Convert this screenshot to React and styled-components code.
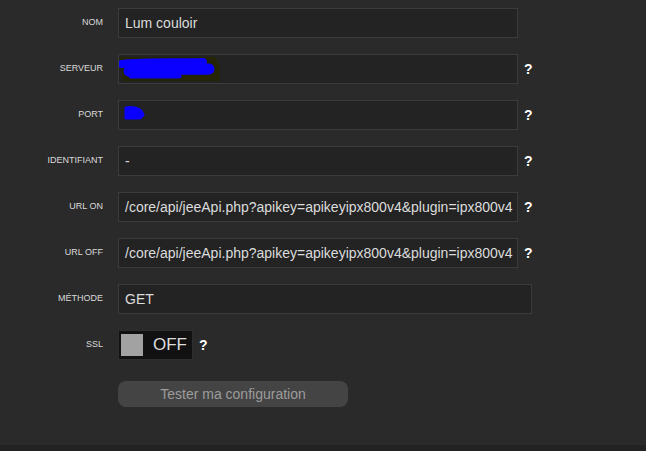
import React from "react";
import styled, { createGlobalStyle } from "styled-components";

const Global = createGlobalStyle`
  html, body { margin: 0; padding: 0; background: #2a2a2a; }
  body { font-family: "Liberation Sans", Arial, sans-serif; }
`;

const Page = styled.div`
  height: 451px;
  display: flex;
  flex-direction: column;
  background: #2a2a2a;
`;

const Form = styled.div`
  flex: 1;
  padding-top: 8px;
  display: flex;
  flex-direction: column;
  gap: 16px;
`;

const Row = styled.div`
  display: grid;
  grid-template-columns: 103px auto auto;
  column-gap: 15px;
  align-items: center;
  justify-content: start;
  height: 30px;
`;

const Label = styled.label`
  text-align: right;
  font-size: 9px;
  color: #dadada;
  text-transform: uppercase;
  margin-top: -2px;
`;

const Field = styled.div`
  display: flex;
  align-items: center;
  gap: 6px;
`;

const Input = styled.div`
  position: relative;
  box-sizing: border-box;
  width: ${(p) => p.$w || 400}px;
  height: 30px;
  background: #232323;
  border: 1px solid #3b3b3b;
  color: #dcdcdc;
  font-size: 14px;
  padding: 0 6px;
  display: flex;
  align-items: center;
  white-space: nowrap;
  overflow: hidden;
`;

const Help = styled.span`
  font-weight: bold;
  font-size: 14px;
  color: #ffffff;
`;

const Scribble = styled.svg`
  position: absolute;
  left: 0;
  top: 0;
`;

const Toggle = styled.div`
  box-sizing: border-box;
  width: 75px;
  height: 30px;
  background: #111111;
  border: 1px solid #2e2e2e;
  display: flex;
  align-items: center;
  padding-left: 2px;
  gap: 10px;
`;

const Knob = styled.span`
  width: 22px;
  height: 22px;
  background: #a2a2a2;
`;

const ToggleText = styled.span`
  color: #dedede;
  font-size: 17px;
`;

const ButtonRow = styled.div`
  display: grid;
  grid-template-columns: 103px auto;
  column-gap: 15px;
  margin-top: 5px;
`;

const Button = styled.button`
  grid-column: 2;
  width: 230px;
  height: 26px;
  border: none;
  border-radius: 8px;
  background: #444444;
  color: #9c9c9c;
  font-family: "Liberation Sans", Arial, sans-serif;
  font-size: 14px;
  padding: 0;
`;

const Footer = styled.div`
  height: 6px;
  background: #222222;
`;

function ServerScribble() {
  return (
    <Scribble width="110" height="30" viewBox="0 0 110 30">
      <path d="M1 2 L96 2 L101 12 L100 26 L4 26 Z" fill="#262600" opacity="0.85" />
      <path d="M3 9 C30 6 60 8 84 7" stroke="#0a00ff" strokeWidth="8" strokeLinecap="round" fill="none" />
      <path d="M10 16 C40 13 70 15 90 14" stroke="#0a00ff" strokeWidth="11" strokeLinecap="round" fill="none" />
      <path d="M12 21 L60 21" stroke="#0a00ff" strokeWidth="5" strokeLinecap="round" fill="none" />
    </Scribble>
  );
}

function PortScribble() {
  return (
    <Scribble width="40" height="30" viewBox="0 0 40 30">
      <path d="M7 7 C12 6 18 7 22 10 L24 14 L21 17 L7 17 Z" fill="#0a00ff" stroke="#0a00ff" strokeWidth="3" strokeLinejoin="round" />
    </Scribble>
  );
}

const rows = [
  { label: "Nom", value: "Lum couloir", help: false },
  { label: "Serveur", value: "", help: true, scribble: <ServerScribble /> },
  { label: "Port", value: "", help: true, scribble: <PortScribble /> },
  { label: "Identifiant", value: "-", help: true },
  { label: "URL ON", value: "/core/api/jeeApi.php?apikey=apikeyipx800v4&plugin=ipx800v4", help: true },
  { label: "URL OFF", value: "/core/api/jeeApi.php?apikey=apikeyipx800v4&plugin=ipx800v4", help: true },
  { label: "Méthode", value: "GET", help: false, w: 414 },
];

export default function App() {
  return (
    <Page>
      <Global />
      <Form>
        {rows.map((r) => (
          <Row key={r.label}>
            <Label>{r.label}</Label>
            <Field>
              <Input $w={r.w}>
                {r.scribble}
                {r.value}
              </Input>
              {r.help && <Help>?</Help>}
            </Field>
          </Row>
        ))}
        <Row>
          <Label>SSL</Label>
          <Field>
            <Toggle>
              <Knob />
              <ToggleText>OFF</ToggleText>
            </Toggle>
            <Help>?</Help>
          </Field>
        </Row>
        <ButtonRow>
          <Button>Tester ma configuration</Button>
        </ButtonRow>
      </Form>
      <Footer />
    </Page>
  );
}
